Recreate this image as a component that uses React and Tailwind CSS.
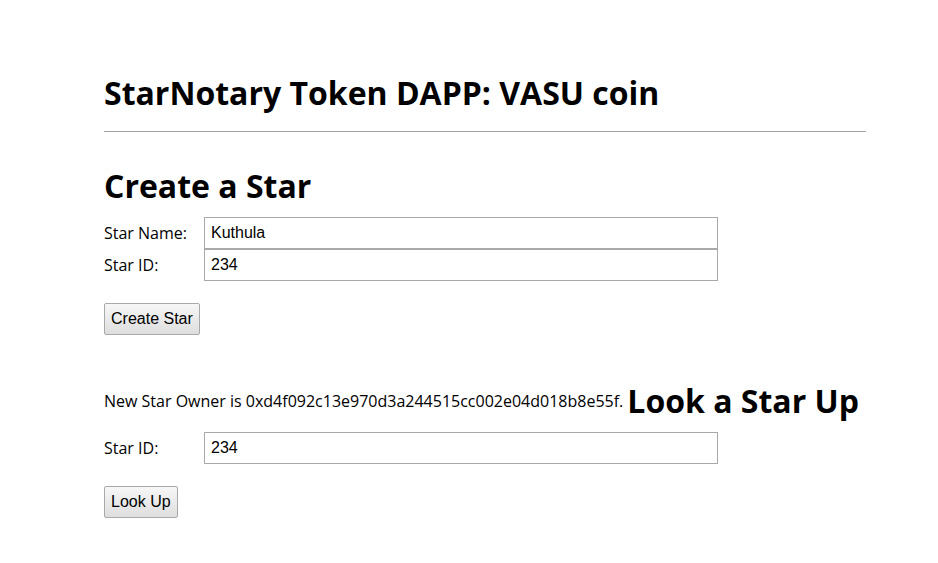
export default function App() {
  return (
    <div className="min-h-screen bg-white text-black">
      <div className="ml-[104px] w-[762px] pt-[61px]">
        <h1 className="font-['Open_Sans',sans-serif] font-bold text-[32px] leading-[64px]">
          StarNotary Token DAPP: VASU coin
        </h1>
        <hr className="mt-[6px] border-0 border-t border-[#a0a0a0]" />

        <h2 className="mt-[32px] font-['Open_Sans',sans-serif] font-bold text-[32px] leading-[44px]">
          Create a Star
        </h2>

        <div className="mt-[9px] font-['Open_Sans',sans-serif] text-[16px]">
          <div className="flex items-center">
            <label className="w-[100px]">Star Name:</label>
            <input
              defaultValue="Kuthula"
              className="w-[514px] h-[32px] border border-[#a9a9a9] px-[6px] font-['Liberation_Sans',Arial,sans-serif] outline-none"
            />
          </div>
          <div className="flex items-center">
            <label className="w-[100px]">Star ID:</label>
            <input
              defaultValue="234"
              className="w-[514px] h-[32px] border border-[#a9a9a9] px-[6px] font-['Liberation_Sans',Arial,sans-serif] outline-none"
            />
          </div>

          <button className="block mt-[22px] h-[32px] px-[6px] border border-[#a9a9a9] rounded-[2px] bg-gradient-to-b from-[#f7f7f7] to-[#dedede] font-['Liberation_Sans',Arial,sans-serif] text-black">
            Create Star
          </button>

          {/* owner line and the lookup heading share one row */}
          <div className="mt-[44px] flex items-center">
            <span>New Star Owner is 0xd4f092c13e970d3a244515cc002e04d018b8e55f.</span>
            <h2 className="ml-[4px] font-['Open_Sans',sans-serif] font-bold text-[32px] leading-[44px]">
              Look a Star Up
            </h2>
          </div>

          <div className="mt-[9px] flex items-center">
            <label className="w-[100px]">Star ID:</label>
            <input
              defaultValue="234"
              className="w-[514px] h-[32px] border border-[#a9a9a9] px-[6px] font-['Liberation_Sans',Arial,sans-serif] outline-none"
            />
          </div>

          <button className="block mt-[22px] h-[32px] px-[6px] border border-[#a9a9a9] rounded-[2px] bg-gradient-to-b from-[#f7f7f7] to-[#dedede] font-['Liberation_Sans',Arial,sans-serif] text-black">
            Look Up
          </button>
        </div>
      </div>
    </div>
  )
}
